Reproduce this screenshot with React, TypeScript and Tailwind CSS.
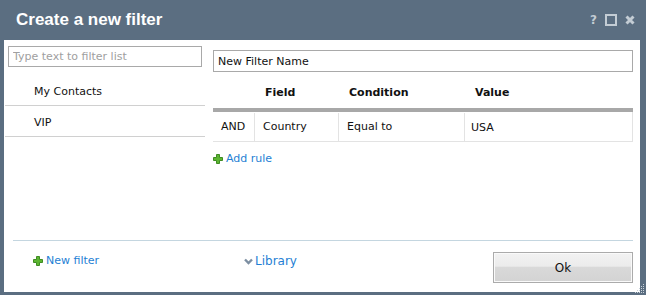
import { ReactNode } from "react";

const body = { fontFamily: '"DejaVu Sans", Verdana, sans-serif' };

function Plus() {
  return (
    <svg width="10" height="10" viewBox="0 0 10 10" className="shrink-0">
      <path
        d="M3.5 0.5h3v3h3v3h-3v3h-3v-3h-3v-3h3z"
        fill="#5cb531"
        stroke="#3f8c22"
        strokeWidth="1"
        strokeLinejoin="round"
      />
    </svg>
  );
}

function Link({ children, icon }: { children: ReactNode; icon: ReactNode }) {
  return (
    <a className="flex items-center gap-[3px] text-[#1f7fd4] cursor-pointer">
      {icon}
      {children}
    </a>
  );
}

const rules = [{ op: "AND", field: "Country", cond: "Equal to", value: "USA" }];

export default function App() {
  return (
    <div
      className="relative flex h-[295px] w-[646px] flex-col bg-[#5b6e81]"
      style={body}
    >
      {/* title bar */}
      <div className="flex h-[40px] items-center justify-between pl-[16px] pr-[11px]">
        <h1
          className="text-[17px] font-bold text-white"
          style={{ fontFamily: '"Liberation Sans", Arial, sans-serif' }}
        >
          Create a new filter
        </h1>
        <div className="flex items-center gap-[8px] text-[#c3ccd4]">
          <span className="text-[12px] font-bold">?</span>
          <span className="h-[12px] w-[12px] border-2 border-[#c3ccd4]" />
          <svg width="10" height="10" viewBox="0 0 10 10">
            <path d="M1.5 1.5l7 7M8.5 1.5l-7 7" stroke="#c3ccd4" strokeWidth="3" />
          </svg>
        </div>
      </div>

      {/* content */}
      <div className="mb-[3px] ml-[4px] mr-[6px] flex flex-1 flex-col bg-white text-[11px] text-[#111]">
        <div className="flex h-[200px]">
          {/* filter list */}
          <div className="w-[201px] pt-[6px]">
            <input
              className="ml-[4px] h-[21px] w-[194px] border border-[#a9a9a9] px-[4px] text-[11px] placeholder:text-[#a0a0a0] outline-none"
              placeholder="Type text to filter list"
            />
            <ul className="ml-[1px] mt-[8px]">
              <li className="flex h-[31px] items-center border-b border-[#d0d0d0] pl-[29px] pt-[4px]">
                My Contacts
              </li>
              <li className="flex h-[31px] items-center border-b border-[#d0d0d0] pl-[29px] pt-[4px]">
                VIP
              </li>
            </ul>
          </div>

          {/* rule editor */}
          <div className="ml-[8px] w-[420px] pt-[10px]">
            <input
              className="h-[22px] w-[420px] border border-[#a9a9a9] px-[4px] text-[11px] text-[#111] outline-none"
              defaultValue="New Filter Name"
            />
            <div className="grid h-[36px] grid-cols-[41px_84px_126px_169px] items-center pt-[7px] font-bold">
              <span />
              <span className="pl-[11px]">Field</span>
              <span className="pl-[11px]">Condition</span>
              <span className="pl-[11px]">Value</span>
            </div>
            <div className="h-[4px] bg-[#a8a8a8]" />
            {rules.map((r) => (
              <div
                key={r.op}
                className="grid h-[30px] grid-cols-[41px_84px_126px_169px] border-b border-r border-[#e3e3e3] pt-[1px]"
              >
                <span className="flex items-center pl-[8px]">{r.op}</span>
                <span className="flex items-center border-l border-[#e3e3e3] pl-[8px]">
                  {r.field}
                </span>
                <span className="flex items-center border-l border-[#e3e3e3] pl-[8px]">
                  {r.cond}
                </span>
                <span className="flex items-center border-l border-[#e3e3e3] pl-[6px] pt-[2px]">
                  {r.value}
                </span>
              </div>
            ))}
            <div className="mt-[9px]">
              <Link icon={<Plus />}>Add rule</Link>
            </div>
          </div>
        </div>

        {/* footer */}
        <div className="ml-[9px] mr-[7px] flex flex-1 items-start border-t border-[#c4d6e0]">
          <div className="mt-[12px] w-[231px] pl-[20px]">
            <Link icon={<Plus />}>New filter</Link>
          </div>
          <a className="mt-[11px] flex items-center gap-[2px] text-[12px] text-[#1f7fd4]">
            <svg width="9" height="7" viewBox="0 0 9 7">
              <path d="M1 1.5l3.5 3.5 3.5-3.5" stroke="#7d8fa2" strokeWidth="2.4" fill="none" />
            </svg>
            Library
          </a>
          <button className="ml-auto mt-[11px] h-[31px] w-[140px] border border-[#ababab] bg-[linear-gradient(#f2f2f2_0%,#ececec_45%,#d9d9d9_50%,#d3d3d3_100%)] text-[12px] text-[#111] shadow-[inset_0_0_0_1px_#fafafa]">
            Ok
          </button>
        </div>
      </div>

      {/* resize grip */}
      <svg className="absolute bottom-[1px] right-[1px]" width="12" height="12" viewBox="0 0 12 12">
        {[
          [10, 2],
          [8, 4],
          [10, 4],
          [6, 6],
          [8, 6],
          [10, 6],
          [4, 8],
          [6, 8],
          [8, 8],
          [10, 8],
          [2, 10],
          [4, 10],
          [6, 10],
          [8, 10],
          [10, 10],
        ].map(([x, y]) => (
          <rect key={`${x}-${y}`} x={x} y={y} width="1" height="1" fill="#c9d2da" />
        ))}
      </svg>
    </div>
  );
}
